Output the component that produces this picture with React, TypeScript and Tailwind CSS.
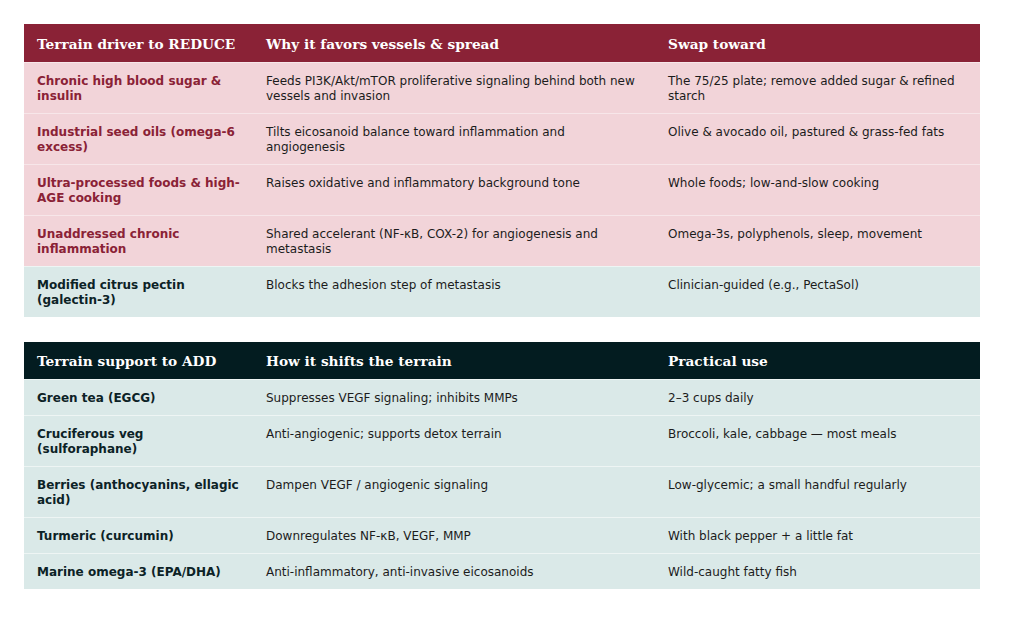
import React from "react";

type Row = { label: string; why: string; use: string; tone?: "pink" | "teal" };

const reduceRows: Row[] = [
  {
    label: "Chronic high blood sugar & insulin",
    why: "Feeds PI3K/Akt/mTOR proliferative signaling behind both new vessels and invasion",
    use: "The 75/25 plate; remove added sugar & refined starch",
    tone: "pink",
  },
  {
    label: "Industrial seed oils (omega-6 excess)",
    why: "Tilts eicosanoid balance toward inflammation and angiogenesis",
    use: "Olive & avocado oil, pastured & grass-fed fats",
    tone: "pink",
  },
  {
    label: "Ultra-processed foods & high-AGE cooking",
    why: "Raises oxidative and inflammatory background tone",
    use: "Whole foods; low-and-slow cooking",
    tone: "pink",
  },
  {
    label: "Unaddressed chronic inflammation",
    why: "Shared accelerant (NF-κB, COX-2) for angiogenesis and metastasis",
    use: "Omega-3s, polyphenols, sleep, movement",
    tone: "pink",
  },
  {
    label: "Modified citrus pectin (galectin-3)",
    why: "Blocks the adhesion step of metastasis",
    use: "Clinician-guided (e.g., PectaSol)",
    tone: "teal",
  },
];

const addRows: Row[] = [
  { label: "Green tea (EGCG)", why: "Suppresses VEGF signaling; inhibits MMPs", use: "2–3 cups daily" },
  { label: "Cruciferous veg (sulforaphane)", why: "Anti-angiogenic; supports detox terrain", use: "Broccoli, kale, cabbage — most meals" },
  { label: "Berries (anthocyanins, ellagic acid)", why: "Dampen VEGF / angiogenic signaling", use: "Low-glycemic; a small handful regularly" },
  { label: "Turmeric (curcumin)", why: "Downregulates NF-κB, VEGF, MMP", use: "With black pepper + a little fat" },
  { label: "Marine omega-3 (EPA/DHA)", why: "Anti-inflammatory, anti-invasive eicosanoids", use: "Wild-caught fatty fish" },
];

function TerrainTable({
  heads,
  rows,
  headClass,
}: {
  heads: string[];
  rows: Row[];
  headClass: string;
}) {
  return (
    <table className="w-full table-fixed border-collapse">
      <colgroup>
        <col className="w-[229px]" />
        <col className="w-[402px]" />
        <col />
      </colgroup>
      <thead>
        <tr className={headClass}>
          {heads.map((h) => (
            <th
              key={h}
              className="h-[38px] px-[13px] pt-[3px] text-left align-middle text-[13.7px] font-bold text-white [font-family:'DejaVu_Serif',serif]"
            >
              {h}
            </th>
          ))}
        </tr>
      </thead>
      <tbody>
        {rows.map((r) => {
          const pink = r.tone === "pink";
          return (
            <tr
              key={r.label}
              className={
                pink
                  ? "border-t border-[#f7e6e9] bg-[#f2d4d9]"
                  : "border-t border-[#eef5f4] bg-[#dae9e8]"
              }
            >
              <td
                className={
                  "px-[13px] pt-[11px] pb-[9px] align-top font-bold " +
                  (pink ? "text-[#8a2236]" : "text-[#0c2226]")
                }
              >
                {r.label}
              </td>
              <td className="px-[13px] pt-[11px] pb-[9px] align-top text-[#1c1c1c]">{r.why}</td>
              <td className="px-[13px] pt-[11px] pb-[9px] align-top text-[#1c1c1c]">{r.use}</td>
            </tr>
          );
        })}
      </tbody>
    </table>
  );
}

export default function App() {
  return (
    <div className="min-h-[638px] w-[1024px] bg-white pt-[24px] text-[12px] leading-[15px] [font-family:'DejaVu_Sans',sans-serif]">
      <div className="ml-[24px] flex w-[956px] flex-col gap-[25px]">
        <TerrainTable
          heads={["Terrain driver to REDUCE", "Why it favors vessels & spread", "Swap toward"]}
          rows={reduceRows}
          headClass="bg-[#8a2236]"
        />
        <TerrainTable
          heads={["Terrain support to ADD", "How it shifts the terrain", "Practical use"]}
          rows={addRows.map((r) => ({ ...r, tone: "teal" as const }))}
          headClass="bg-[#031c20]"
        />
      </div>
    </div>
  );
}
